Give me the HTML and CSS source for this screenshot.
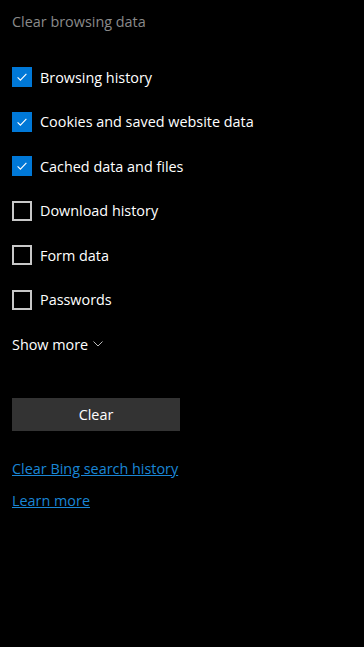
FILE: index.html
```html
<!DOCTYPE html>
<html lang="en">
<head>
    <meta charset="UTF-8">
    <meta name="viewport" content="width=device-width, initial-scale=1.0">
    <title>Clear browsing data</title>
    <link rel="stylesheet" href="styles.css">
</head>
<body>
    <div class="panel">
        <h2 class="title">Clear browsing data</h2>

        <div class="options">
            <label class="opt"><span class="box on"><svg viewBox="0 0 20 20"><path d="M4.5 10.5l3.5 3.5 7.5-8" /></svg></span>Browsing history</label>
            <label class="opt"><span class="box on"><svg viewBox="0 0 20 20"><path d="M4.5 10.5l3.5 3.5 7.5-8" /></svg></span>Cookies and saved website data</label>
            <label class="opt"><span class="box on"><svg viewBox="0 0 20 20"><path d="M4.5 10.5l3.5 3.5 7.5-8" /></svg></span>Cached data and files</label>
            <label class="opt"><span class="box"></span>Download history</label>
            <label class="opt"><span class="box"></span>Form data</label>
            <label class="opt"><span class="box"></span>Passwords</label>
        </div>

        <div class="more">Show more <svg class="chev" viewBox="0 0 10 6"><path d="M0.5 0.5l4.5 4.5 4.5-4.5" /></svg></div>

        <button class="bot">Clear</button>

        <a class="lnk" href="#">Clear Bing search history</a>
        <a class="lnk" href="#">Learn more</a>
    </div>
</body>
</html>
```

FILE: styles.css
```css
body {
    margin: 0;
    padding: 0;
    background-color: #000;
    color: #fff;
    font-family: "Open Sans", "Noto Sans", sans-serif;
}
.panel {
    padding: 11px 12px 10px;
}
.title {
    margin: 0;
    font-size: 14.4px;
    font-weight: normal;
    color: #8a8a8a;
    line-height: 22px;
}
.options {
    display: flex;
    flex-direction: column;
    gap: 24.5px;
    margin-top: 34px;
}
.opt {
    display: flex;
    align-items: center;
    gap: 8px;
    font-size: 14.4px;
    height: 20px;
}
.box {
    width: 16px;
    height: 16px;
    border: 2px solid #c8c8c8;
    display: flex;
    align-items: center;
    justify-content: center;
}
.box.on {
    border-color: #0078d7;
    background-color: #0078d7;
}
.box svg {
    width: 20px;
    height: 20px;
    fill: none;
    stroke: #fff;
    stroke-width: 1.4;
}
.more {
    margin-top: 25px;
    font-size: 14.4px;
    display: flex;
    align-items: center;
    gap: 5px;
}
.chev {
    width: 10px;
    height: 6px;
    fill: none;
    stroke: #bbb;
    stroke-width: 1;
}
.bot {
    display: block;
    width: 168px;
    height: 33px;
    margin-top: 44px;
    background-color: #333;
    color: #fff;
    border: none;
    font-family: inherit;
    font-size: 14.4px;
}
.lnk {
    display: block;
    width: max-content;
    color: #1a86d6;
    font-size: 14.4px;
    text-decoration: underline;
    line-height: 20px;
}
.lnk + .lnk {
    margin-top: 12px;
}
.bot + .lnk {
    margin-top: 28px;
}
```
